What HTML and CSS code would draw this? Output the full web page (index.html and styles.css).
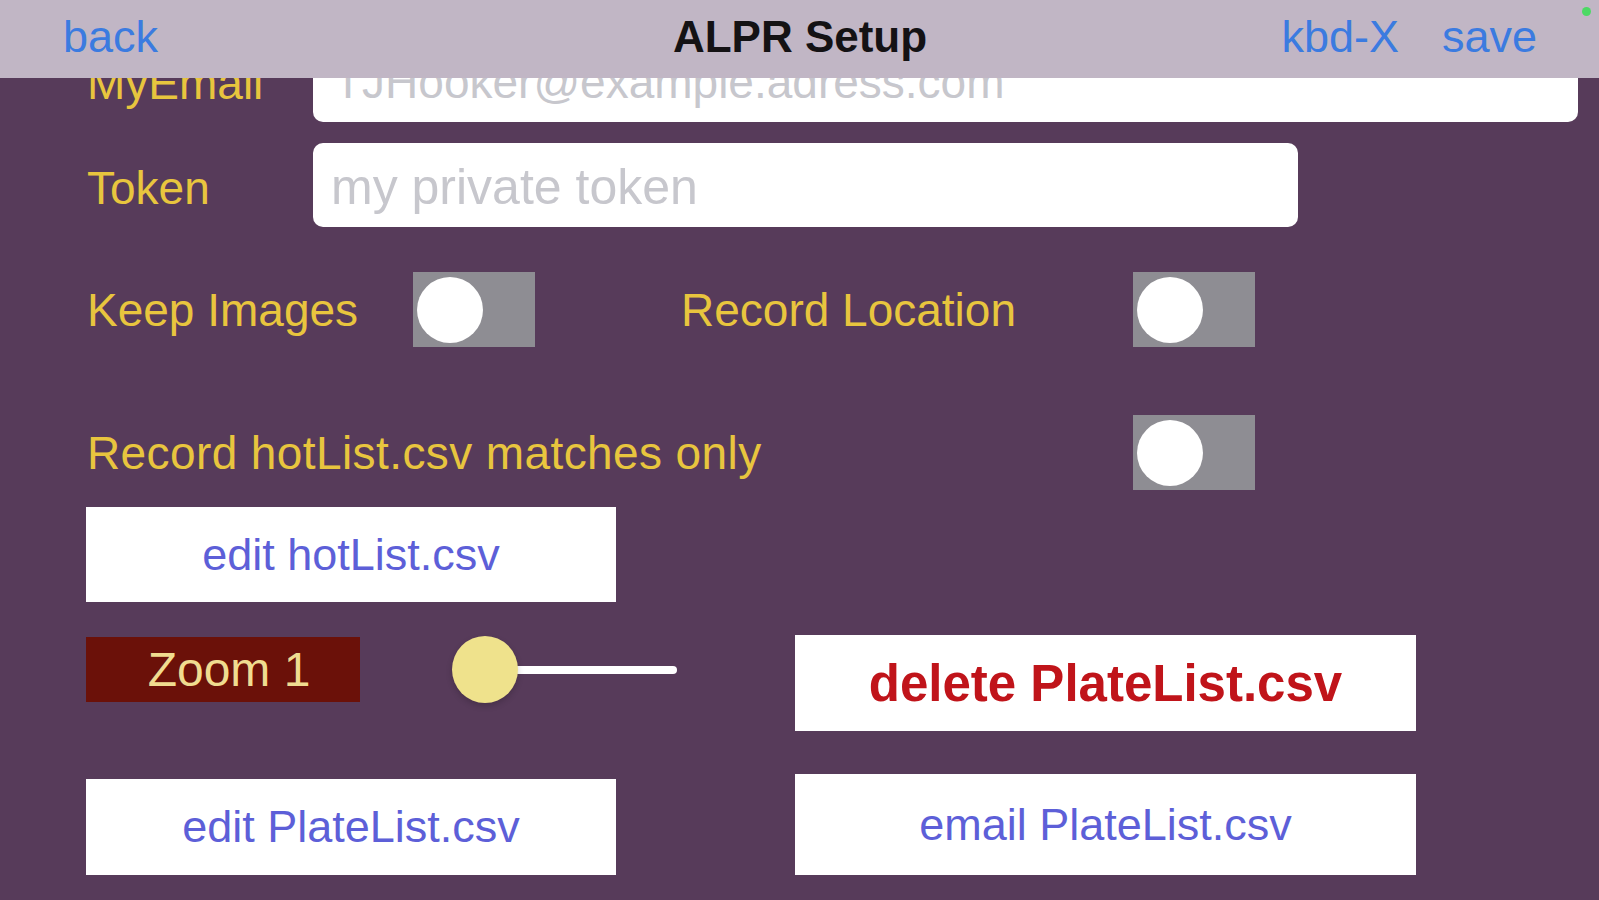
FILE: index.html
```html
<!DOCTYPE html>
<html lang="en">
<head>
<meta charset="utf-8">
<title>ALPR Setup</title>
<link rel="stylesheet" href="styles.css">
</head>
<body>
<div class="screen">
  <header class="navbar">
    <div class="nav-left"><span class="nav-link">back</span></div>
    <div class="nav-title">ALPR Setup</div>
    <div class="nav-right"><span class="nav-link">kbd-X</span><span class="nav-link">save</span></div>
    <span class="status-dot"></span>
  </header>
  <main class="content">
    <div class="field-row">
      <span class="label field-label">MyEmail</span>
      <input class="text-input email" type="text" placeholder="TJHooker@example.adress.com">
    </div>
    <div class="field-row row-token">
      <span class="label field-label">Token</span>
      <input class="text-input token" type="text" placeholder="my private token">
    </div>
    <div class="toggle-row row-toggles">
      <span class="label keep-label">Keep Images</span>
      <div class="toggle"><span class="knob"></span></div>
      <span class="label location-label">Record Location</span>
      <div class="toggle"><span class="knob"></span></div>
    </div>
    <div class="toggle-row row-hot">
      <span class="label hot-label">Record hotList.csv matches only</span>
      <div class="toggle"><span class="knob"></span></div>
    </div>
    <div class="row-hotbtn">
      <button class="btn btn-left">edit hotList.csv</button>
    </div>
    <div class="row-zoom">
      <div class="zoom-group">
        <div class="zoom-label">Zoom 1</div>
        <div class="slider">
          <span class="thumb"></span>
          <span class="track"></span>
        </div>
      </div>
      <button class="btn btn-right btn-danger">delete PlateList.csv</button>
    </div>
    <div class="row-files">
      <button class="btn btn-left btn-edit-plate">edit PlateList.csv</button>
      <button class="btn btn-right btn-email">email PlateList.csv</button>
    </div>
  </main>
</div>
</body>
</html>
```
FILE: styles.css
```css
* { box-sizing: border-box; }
html, body { margin: 0; height: 100%; }
body {
  background: #573b5a;
  font-family: "Liberation Sans", Arial, Helvetica, sans-serif;
  overflow: hidden;
}
.screen {
  position: relative;
  width: 1599px;
  height: 900px;
  overflow: hidden;
}
.navbar {
  position: absolute;
  top: 0; left: 0; right: 0;
  height: 78px;
  background: #c1b6c5;
  display: grid;
  grid-template-columns: 1fr auto 1fr;
  align-items: start;
  padding: 14px 62px 0 63px;
  z-index: 2;
}
.nav-link {
  font-size: 45px;
  line-height: 45px;
  color: #3b7be0;
}
.nav-title {
  font-size: 44px;
  line-height: 45px;
  font-weight: 700;
  color: #141214;
}
.nav-right {
  display: flex;
  justify-content: flex-end;
  gap: 43px;
}
.status-dot {
  position: absolute;
  top: 7px;
  right: 8px;
  width: 9px;
  height: 9px;
  border-radius: 50%;
  background: #4cd964;
}
.content {
  padding: 38px 0 0 87px;
  display: flex;
  flex-direction: column;
}
.label {
  font-size: 46px;
  line-height: 46px;
  color: #e8c53e;
  white-space: nowrap;
}
.field-row {
  display: flex;
  align-items: center;
  height: 84px;
}
.field-label {
  width: 226px;
  padding-top: 6px;
}
.email-label { letter-spacing: 1px; }
.text-input {
  height: 84px;
  border: none;
  border-radius: 10px;
  background: #fff;
  font-family: inherit;
  font-size: 46px;
  padding: 4px 0 0 21px;
  outline: none;
  color: #222;
}
.text-input::placeholder { color: #c7c7cd; }
.email { width: 1265px; }
.token { width: 985px; font-size: 50px; padding-left: 18px; }
.row-token { margin-top: 21px; }
.toggle-row {
  display: flex;
  align-items: center;
  height: 75px;
}
.row-toggles { margin-top: 45px; }
.keep-label { width: 326px; }
.location-label { width: 452px; margin-left: 146px; }
.hot-label { width: 1046px; letter-spacing: 0.4px; }
.row-hot { margin-top: 68px; }
.toggle {
  width: 122px;
  height: 75px;
  background: #8e8d93;
  display: flex;
  align-items: center;
  padding-left: 4px;
}
.knob {
  width: 66px;
  height: 66px;
  border-radius: 50%;
  background: #fff;
}
.btn {
  background: #fff;
  border: none;
  font-family: inherit;
  font-size: 45px;
  color: #5d5fd8;
  display: flex;
  align-items: center;
  justify-content: center;
  padding: 0;
  margin: 0;
}
.btn-left { width: 530px; height: 95px; margin-left: -1px; }
.btn-right { width: 621px; height: 96px; }
.row-hotbtn { margin-top: 17px; }
.row-zoom {
  margin-top: 33px;
  display: flex;
  align-items: flex-start;
}
.zoom-group {
  display: flex;
  align-items: center;
  width: 708px;
  margin-top: 1px;
}
.zoom-label {
  width: 274px;
  height: 65px;
  background: #6b1109;
  color: #f0dc90;
  font-size: 48px;
  display: flex;
  align-items: center;
  justify-content: center;
  padding-left: 12px;
  margin-left: -1px;
}
.slider {
  display: flex;
  align-items: center;
  margin-left: 92px;
}
.thumb {
  position: relative;
  z-index: 1;
  width: 66px;
  height: 67px;
  border-radius: 50%;
  background: #efe28c;
  box-shadow: 0 3px 6px rgba(0, 0, 0, 0.18);
}
.track {
  width: 163px;
  height: 8px;
  margin-left: -4px;
  border-radius: 4px;
  background: #fff;
}
.btn-danger {
  color: #c0141a;
  font-weight: 700;
  font-size: 51px;
}
.row-files {
  margin-top: 43px;
  display: flex;
  align-items: flex-end;
}
.btn-edit-plate { height: 96px; margin-right: 179px; }
.btn-email { height: 101px; }
```
